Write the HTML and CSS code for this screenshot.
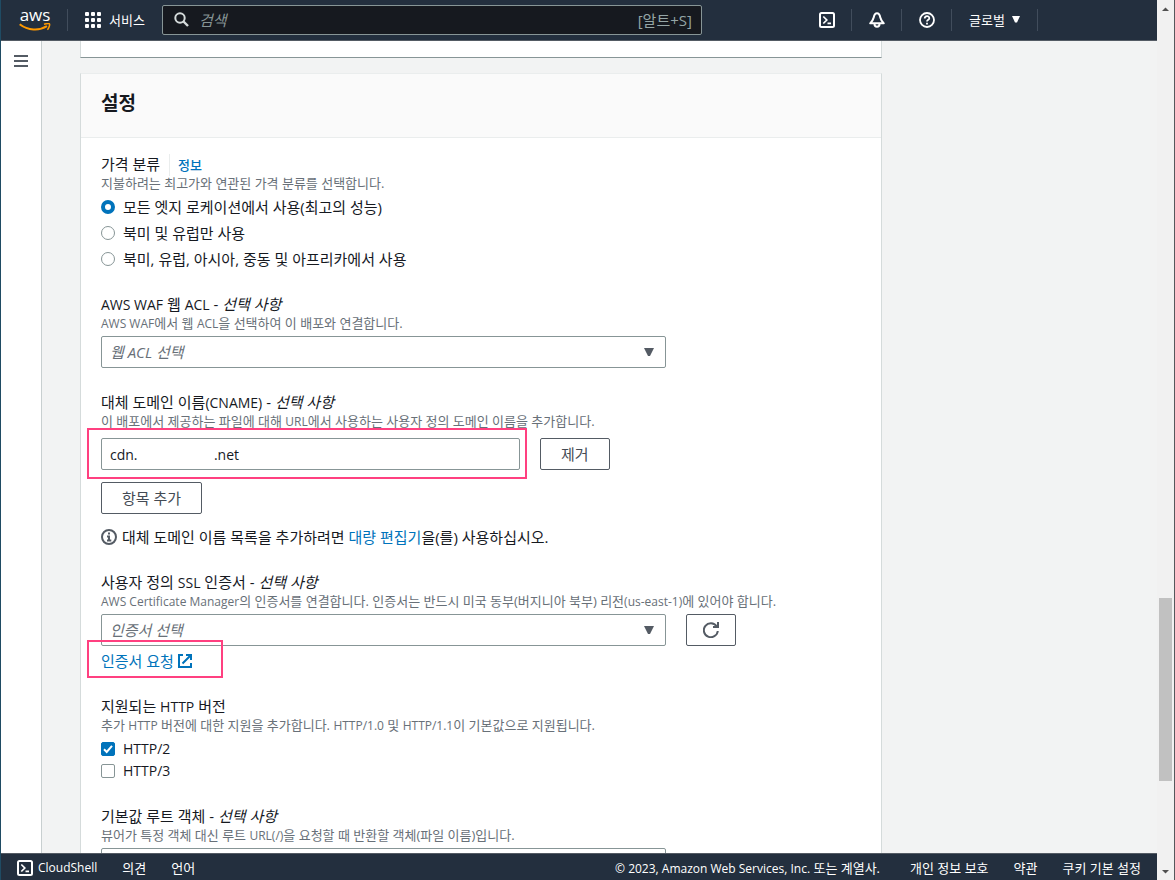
FILE: index.html
```html
<!DOCTYPE html>
<html lang="ko">
<head>
<meta charset="utf-8">
<title>배포 설정</title>
<link rel="stylesheet" href="styles.css">
</head>
<body>
<div class="window">
  <div class="app">
    <header class="topbar">
      <a class="logo" href="#" aria-label="aws">
        <span class="logo-text">aws</span>
        <svg class="logo-smile" width="32" height="9" viewBox="0 0 32 9"><path d="M0.7 1.2C9 7.6 20 8.2 28 3.2" fill="none" stroke="#ff9900" stroke-width="2"/><path d="M25 1.3C27.500 0.500 30 0.300 30.500 0.900S30 5 28.400 6.800" fill="none" stroke="#ff9900" stroke-width="1.500"/></svg>
      </a>
      <span class="divider"></span>
      <button class="services" type="button">
        <svg width="16" height="16" viewBox="0 0 16 16" fill="#fff"><rect width="4" height="4" rx="1"/><rect x="6" width="4" height="4" rx="1"/><rect x="12" width="4" height="4" rx="1"/><rect y="6" width="4" height="4" rx="1"/><rect x="6" y="6" width="4" height="4" rx="1"/><rect x="12" y="6" width="4" height="4" rx="1"/><rect y="12" width="4" height="4" rx="1"/><rect x="6" y="12" width="4" height="4" rx="1"/><rect x="12" y="12" width="4" height="4" rx="1"/></svg>
        서비스
      </button>
      <div class="search">
        <svg width="15" height="15" viewBox="0 0 15 15" fill="none" stroke="#d5dbdb" stroke-width="2"><circle cx="6" cy="6" r="4.700"/><path d="M9.500 9.500L14 14" stroke-width="2.400"/></svg>
        <input class="search-input" type="search" placeholder="검색" aria-label="검색">
        <span class="shortcut">[알트+S]</span>
      </div>
      <nav class="tools">
        <button class="tool" type="button" aria-label="CloudShell"><svg width="16" height="16" viewBox="0 0 16 16" fill="none" stroke="#fff" stroke-width="2"><rect x="1" y="1" width="14" height="14" rx="1.500"/><path d="M4.300 4.500L7.800 8L4.300 11.500M8.500 11.300H12" stroke-width="1.700"/></svg></button>
        <span class="divider"></span>
        <button class="tool" type="button" aria-label="알림"><svg width="16" height="16" viewBox="0 0 16 16" fill="none" stroke="#fff" stroke-width="2" stroke-linejoin="round"><path d="M8 1.200C5.800 1.200 5.200 3 4.700 5.500C4.200 8 3.300 9 1.200 11.300H14.800C12.700 9 11.800 8 11.300 5.500C10.800 3 10.200 1.200 8 1.200Z"/><path d="M5.500 12C5.500 15.700 10.500 15.700 10.500 12"/></svg></button>
        <span class="divider"></span>
        <button class="tool" type="button" aria-label="도움말"><svg width="16" height="16" viewBox="0 0 16 16" fill="none" stroke="#fff" stroke-width="1.800"><circle cx="8" cy="8" r="7"/><path d="M5.700 6.600C5.700 3.400 10.300 3.400 10.300 6.200C10.300 7.800 8 7.800 8 9.600M8 10.700V12.400"/></svg></button>
        <span class="divider"></span>
        <button class="region" type="button">글로벌 <svg width="8" height="7" viewBox="0 0 8 7"><path d="M0 0H8L5 6.500H3Z" fill="#fff"/></svg></button>
        <span class="divider"></span>
      </nav>
    </header>

    <div class="body">
      <aside class="rail">
        <button class="menu" type="button" aria-label="메뉴"><svg width="14" height="12" viewBox="0 0 14 12" fill="#545b64"><rect width="14" height="2"/><rect y="5" width="14" height="2"/><rect y="10" width="14" height="2"/></svg></button>
      </aside>
      <main class="content">
        <div class="card card-previous"></div>
        <section class="card">
          <div class="card-header"><h2 class="card-title">설정</h2></div>
          <form class="card-body">
            <fieldset class="field">
              <legend class="label">가격 분류 <a class="info-link" href="#">정보</a></legend>
              <p class="hint">지불하려는 최고가와 연관된 가격 분류를 선택합니다.</p>
              <div class="control options">
                <label class="option"><input class="radio" type="radio" name="price" checked>모든 엣지 로케이션에서 사용(최고의 성능)</label>
                <label class="option"><input class="radio" type="radio" name="price">북미 및 유럽만 사용</label>
                <label class="option"><input class="radio" type="radio" name="price">북미, 유럽, 아시아, 중동 및 아프리카에서 사용</label>
              </div>
            </fieldset>

            <div class="field">
              <label class="label" for="acl"><span class="latin">AWS WAF</span> 웹 <span class="latin">ACL</span> - <em>선택 사항</em></label>
              <p class="hint"><span class="latin">AWS WAF</span>에서 웹 <span class="latin">ACL</span>을 선택하여 이 배포와 연결합니다.</p>
              <div class="control row">
                <div class="select-wrap">
                  <select class="select" id="acl"><option>웹 ACL 선택</option></select>
                  <svg class="caret" width="10" height="8" viewBox="0 0 10 8"><path d="M0 0H10L6 8H4Z" fill="#545b64"/></svg>
                </div>
              </div>
            </div>

            <div class="field">
              <label class="label" for="cname">대체 도메인 이름<span class="latin">(CNAME)</span> - <em>선택 사항</em></label>
              <p class="hint">이 배포에서 제공하는 파일에 대해 <span class="latin">URL</span>에서 사용하는 사용자 정의 도메인 이름을 추가합니다.</p>
              <div class="control control-list">
                <div class="row">
                  <div class="input-wrap">
                    <input class="input" id="cname" type="text" value="cdn.                     .net">
                    <span class="mark mark-input"></span>
                  </div>
                  <button class="button" type="button">제거</button>
                </div>
                <button class="button" type="button">항목 추가</button>
                <p class="note"><svg width="16" height="16" viewBox="0 0 16 16" fill="none" stroke="#545b64" stroke-width="2"><circle cx="8" cy="8" r="7"/><path d="M8 3.500V5.500M6 7.500H8V11.500M6 11.500H10.300"/></svg><span>대체 도메인 이름 목록을 추가하려면 <a class="link" href="#">대량 편집기</a>을(를) 사용하십시오.</span></p>
              </div>
            </div>

            <div class="field">
              <label class="label" for="cert">사용자 정의 <span class="latin">SSL</span> 인증서 - <em>선택 사항</em></label>
              <p class="hint"><span class="latin">AWS Certificate Manager</span>의 인증서를 연결합니다. 인증서는 반드시 미국 동부(버지니아 북부) 리전<span class="latin">(us-east-1)</span>에 있어야 합니다.</p>
              <div class="control row">
                <div class="select-wrap">
                  <select class="select" id="cert"><option>인증서 선택</option></select>
                  <svg class="caret" width="10" height="8" viewBox="0 0 10 8"><path d="M0 0H10L6 8H4Z" fill="#545b64"/></svg>
                </div>
                <button class="button button-icon" type="button" aria-label="새로 고침"><svg width="16" height="16" viewBox="0 0 16 16" fill="none" stroke="#545b64" stroke-width="2"><path d="M14.800 9A7 7 0 1 1 13.600 4.200"/><path d="M15 0V5H10"/></svg></button>
              </div>
              <div class="request">
                <a class="link request-link" href="#">인증서 요청<svg width="14" height="14" viewBox="0 0 14 14" fill="none" stroke="#0073bb" stroke-width="2"><path d="M5 1H1V13H13V9"/><path d="M8 1H13V6M13 1L4.500 9.500"/></svg></a>
                <span class="mark mark-link"></span>
              </div>
            </div>

            <fieldset class="field">
              <legend class="label">지원되는 <span class="latin">HTTP</span> 버전</legend>
              <p class="hint">추가 <span class="latin">HTTP</span> 버전에 대한 지원을 추가합니다. <span class="latin">HTTP/1.0</span> 및 <span class="latin">HTTP/1.1</span>이 기본값으로 지원됩니다.</p>
              <div class="control">
                <label class="option"><input class="checkbox" type="checkbox" checked><span class="latin">HTTP/2</span></label>
                <label class="option"><input class="checkbox" type="checkbox"><span class="latin">HTTP/3</span></label>
              </div>
            </fieldset>

            <div class="field">
              <label class="label" for="root">기본값 루트 객체 - <em>선택 사항</em></label>
              <p class="hint">뷰어가 특정 객체 대신 루트 <span class="latin">URL(/)</span>을 요청할 때 반환할 객체(파일 이름)입니다.</p>
              <div class="control row"><div class="select-wrap"><input class="input" id="root" type="text"></div></div>
            </div>
          </form>
        </section>
      </main>
    </div>

    <footer class="footer">
      <a class="footer-link shell" href="#"><svg width="16" height="16" viewBox="0 0 16 16" fill="none" stroke="#fff" stroke-width="2"><rect x="1" y="1" width="14" height="14" rx="1.500"/><path d="M4.300 4.500L7.800 8L4.300 11.500M8.500 11.300H12" stroke-width="1.700"/></svg><span class="latin">CloudShell</span></a>
      <a class="footer-link" href="#">의견</a>
      <a class="footer-link" href="#">언어</a>
      <span class="copyright"><span class="latin">© 2023, Amazon Web Services, Inc.</span> 또는 계열사.</span>
      <a class="footer-link privacy" href="#">개인 정보 보호</a>
      <a class="footer-link" href="#">약관</a>
      <a class="footer-link" href="#">쿠키 기본 설정</a>
    </footer>
  </div>
  <div class="scrollbar">
    <svg class="scroll-arrow" width="17" height="17" viewBox="0 0 17 17"><path d="M5 11L8.500 7.500L12 11Z" fill="#505050"/></svg>
    <div class="scroll-before"></div>
    <div class="scroll-thumb"></div>
    <div class="scroll-after"></div>
    <svg class="scroll-arrow" width="17" height="17" viewBox="0 0 17 17"><path d="M5 7L8.500 10.500L12 7Z" fill="#505050"/></svg>
  </div>
</div>
</body>
</html>
```
FILE: styles.css
```css
* { box-sizing: border-box; }

body {
  margin: 0;
  background: #f2f3f3;
  color: #16191f;
  font: 15px/22px "Open Sans", "Noto Sans CJK KR", sans-serif;
}

button, input, select { font: inherit; color: inherit; }
button { cursor: pointer; }
svg { display: block; flex: none; }
a { color: #0073bb; text-decoration: none; }
p, h2 { margin: 0; }

/* Latin runs sit one size below the Hangul around them */
.latin { font-size: 14px; line-height: 16px; }
.hint .latin, .footer .latin { font-size: 12px; line-height: 12px; }

.window {
  display: flex;
  height: 100vh;
  overflow: hidden;
  border-left: 1px solid #1f4b63;
  border-right: 1px solid #55585c;
}

.app {
  display: flex;
  flex: 1;
  flex-direction: column;
  min-width: 0;
}

/* Top navigation */
.topbar {
  display: flex;
  flex: none;
  align-items: center;
  height: 41px;
  padding: 0 119px 1px 18px;
  border-bottom: 1px solid #545b64;
  background: #232f3e;
  color: #fff;
  font-size: 13px;
}

.logo {
  display: flex;
  flex-direction: column;
  align-items: center;
  width: 32px;
  color: #fff;
}

.logo-text {
  height: 15px;
  font-size: 17px;
  line-height: 13px;
}

.divider {
  width: 1px;
  height: 22px;
  background: #414d5c;
}

.logo + .divider { margin-left: 16px; }

.services, .tool, .region {
  display: flex;
  align-items: center;
  padding: 0;
  border: 0;
  background: none;
}

.services { gap: 8px; margin: 0 17px; }

.search {
  display: flex;
  flex: 0 1 540px;
  align-items: center;
  gap: 10px;
  height: 30px;
  padding: 0 9px 0 11px;
  border: 1px solid #879596;
  border-radius: 2px;
  background: #16191f;
  color: #95a5a6;
  font-size: 15px;
}

.search-input {
  flex: 1;
  min-width: 0;
  padding: 0;
  border: 0;
  outline: 0;
  background: none;
}

.search-input::placeholder { color: #879596; font-style: italic; opacity: 1; }

.tools {
  display: flex;
  align-items: center;
  margin-left: auto;
}

.tool { padding: 0 16px 0 17px; }
.region { gap: 7px; padding: 0 17px; }

/* Page body */
.body {
  display: flex;
  flex: 1;
  min-height: 0;
  overflow: hidden;
}

.rail {
  display: flex;
  flex: none;
  align-items: flex-start;
  width: 41px;
  padding: 14px 13px;
  border-right: 1px solid #c8cfd0;
  background: #fff;
}

.menu { padding: 0; border: 0; background: none; }

.content {
  flex: 1;
  min-width: 0;
  padding: 0 38px;
}

.card {
  max-width: 802px;
  border: 1px solid #d5dbdb;
  border-top-color: #eaeded;
  background: #fff;
}

.card-previous {
  height: 17px;
  margin-bottom: 15px;
  border-top: 0;
  border-bottom-color: #879596;
}

.card-header {
  padding: 15px 20px 20px;
  border-bottom: 1px solid #eaeded;
  background: #fafafa;
}

.card-title {
  font-size: 19px;
  font-weight: 700;
  line-height: 28px;
}

.card-body {
  display: flex;
  flex-direction: column;
  gap: 23px;
  padding: 15px 20px 24px;
}

/* Form fields */
.field { min-width: 0; margin: 0; padding: 0; border: 0; }
.label { display: block; padding: 0; }

.info-link {
  margin-left: 5px;
  padding: 2px 0 2px 8px;
  border-left: 1px solid #eaeded;
  font-size: 13px;
  font-weight: 500;
  line-height: 16px;
}

.hint {
  color: #687078;
  font-size: 13px;
  line-height: 16px;
}

.control { margin-top: 5px; }
.options { display: grid; gap: 4px; }
.row { display: flex; gap: 20px; }

.control-list {
  display: flex;
  flex-direction: column;
  align-items: flex-start;
  gap: 12px;
  margin-top: 9px;
}

.control-list .row { width: 100%; }

.option {
  display: flex;
  align-items: center;
  gap: 8px;
  height: 22px;
  line-height: 20px;
}

.radio, .checkbox {
  flex: none;
  width: 14px;
  height: 14px;
  margin: 0;
  border: 1px solid #879596;
  background: #fff;
  appearance: none;
}

.radio { border-radius: 50%; }
.radio:checked { border: 4px solid #0073bb; }
.checkbox { border-radius: 2px; }

.checkbox:checked {
  border-color: #0073bb;
  background: #0073bb url("data:image/svg+xml,%3Csvg xmlns='http://www.w3.org/2000/svg' viewBox='0 0 12 12'%3E%3Cpath d='M2 6.300L4.700 9L10 2.800' fill='none' stroke='white' stroke-width='2'/%3E%3C/svg%3E");
}

.select-wrap { position: relative; flex: 0 1 565px; min-width: 0; }
.input-wrap { position: relative; flex: 0 1 419px; min-width: 0; }

.select, .input {
  display: block;
  width: 100%;
  height: 32px;
  padding: 0 8px;
  border: 1px solid #879596;
  border-radius: 2px;
  background: #fff;
  font-size: 14px;
}

.select {
  color: #687078;
  font-size: 15px;
  font-style: italic;
  appearance: none;
}

.caret {
  position: absolute;
  top: 12px;
  right: 12px;
  pointer-events: none;
}

.button {
  flex: none;
  height: 32px;
  padding: 0 20px;
  border: 1px solid #545b64;
  border-radius: 2px;
  background: #fff;
  color: #444b54;
  line-height: 22px;
}

.button-icon { padding: 0 16px; }

.note { display: flex; align-items: center; gap: 5px; }
.request { position: relative; margin-top: 4px; }
.request-link { display: inline-flex; align-items: center; gap: 4px; }

.mark {
  position: absolute;
  border: 2px solid #ff4080;
  pointer-events: none;
}

.mark-input { inset: -10px -7px -9px -14px; }
.mark-link { top: -10px; left: -14px; width: 136px; height: 38px; }

/* Footer */
.footer {
  display: flex;
  flex: none;
  align-items: center;
  gap: 25px;
  height: 27px;
  padding: 2px 16px 0;
  border-top: 1px solid #545b64;
  background: #232f3e;
  color: #fff;
  font-size: 13px;
  line-height: 20px;
}

.footer-link { color: #fff; }
.shell { display: flex; align-items: center; gap: 5px; }
.copyright { margin-left: auto; }
.privacy { margin-left: 5px; }

/* Scroll bar */
.scrollbar {
  display: flex;
  flex: none;
  flex-direction: column;
  width: 17px;
  background: #f1f1f1;
}

.scroll-before { flex: 581; }
.scroll-thumb { flex: 183; margin: 0 2px; background: #c1c1c1; }
.scroll-after { flex: 82; }
```
